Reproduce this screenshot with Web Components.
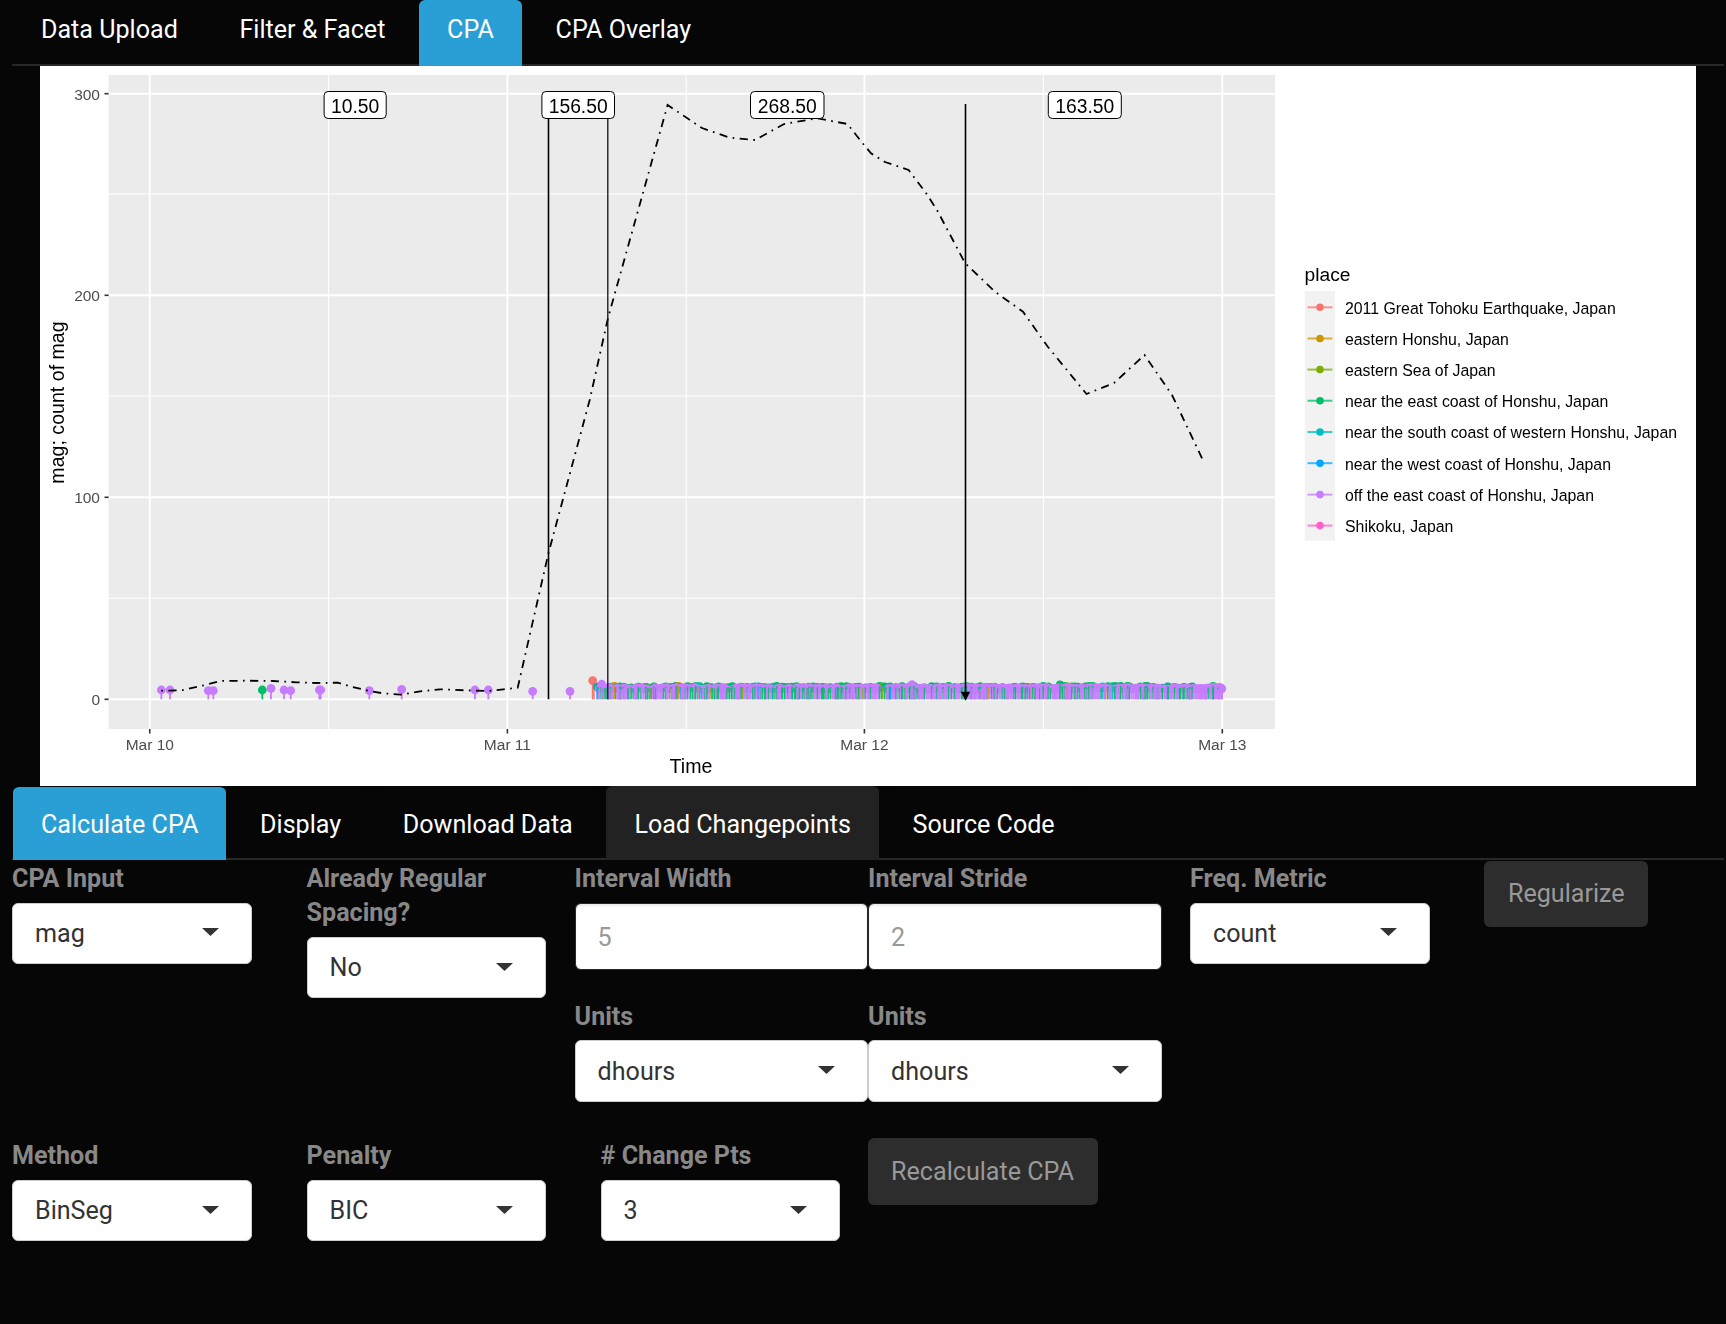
<!DOCTYPE html>
<html lang="en"><head><meta charset="utf-8"><title>CPA</title>
<style>
html,body{margin:0;background:#060606;}
body{font-family:Roboto,"Liberation Sans",sans-serif;font-size:25.1px;color:#fff;height:1324px;overflow:hidden;}
</style></head><body>
<x-tabs first>
  <x-tab>Data Upload</x-tab><x-tab>Filter &amp; Facet</x-tab><x-tab active>CPA</x-tab><x-tab>CPA Overlay</x-tab>
</x-tabs>
<x-plot></x-plot>
<x-tabs>
  <x-tab active>Calculate CPA</x-tab><x-tab>Display</x-tab><x-tab>Download Data</x-tab><x-tab hovered>Load Changepoints</x-tab><x-tab>Source Code</x-tab>
</x-tabs>
<x-row cols="294.6px 268px 293.5px 322px 294.4px auto" gap="35">
  <x-field label="CPA Input"><x-select style="width:239.8px">mag</x-select></x-field>
  <x-field label="Already Regular Spacing?"><x-select style="width:239px">No</x-select></x-field>
  <div>
    <x-field label="Interval Width"><x-input>5</x-input></x-field>
    <x-field label="Units" style="margin-top:27px"><x-select>dhours</x-select></x-field>
  </div>
  <div style="width:293.7px">
    <x-field label="Interval Stride"><x-input>2</x-input></x-field>
    <x-field label="Units" style="margin-top:27px"><x-select>dhours</x-select></x-field>
  </div>
  <x-field label="Freq. Metric"><x-select style="width:239.6px">count</x-select></x-field>
  <x-btn>Regularize</x-btn>
</x-row>
<x-row cols="294.6px 294px 267px 320px" gap="0">
  <x-field label="Method"><x-select style="width:239.8px">BinSeg</x-select></x-field>
  <x-field label="Penalty"><x-select style="width:239px">BIC</x-select></x-field>
  <x-field label="# Change Pts"><x-select style="width:239.2px">3</x-select></x-field>
  <x-btn tall>Recalculate CPA</x-btn>
</x-row>
<script>
const mk=(html)=>{const t=document.createElement('template');t.innerHTML=html;return t;};
class Base extends HTMLElement{
  connectedCallback(){ if(!this.shadowRoot){this.attachShadow({mode:'open'}).appendChild(this.constructor.tpl.content.cloneNode(true));this.init&&this.init();} }
}
class XTabs extends Base{
  static tpl=mk(`<style>
  :host{display:flex;box-sizing:border-box;margin-left:12px;width:1712px;padding-left:1px;border-bottom:2px solid #282828;--pt:20.5px;--pb:17.3px;--bw:1.5px;}
  :host([first]){height:66px;--pt:13.2px;--pb:18.1px;--bw:0px;}
  </style><slot></slot>`);
}
class XTab extends Base{
  static tpl=mk(`<style>
  :host{display:block;box-sizing:border-box;padding:var(--pt) 28px var(--pb);margin:0 5.7px -2px 0;line-height:34.7px;font-size:25.1px;color:#fff;white-space:nowrap;border-top:var(--bw) solid #060606;background-clip:padding-box;border-radius:6px 6px 0 0;}
  :host([active]){background-color:#2A9FD6;}
  :host([hovered]){background-color:#222;border-top-color:#222;}
  </style><slot></slot>`);
}
class XRow extends Base{
  static tpl=mk(`<style>:host{display:grid;margin-left:12px;align-items:start;}</style><slot></slot>`);
  init(){this.style.gridTemplateColumns=this.getAttribute('cols');this.style.marginBottom=this.getAttribute('gap')+'px';}
}
class XField extends Base{
  static tpl=mk(`<style>
  :host{display:block;}
  label{display:block;font-weight:700;color:#888;font-size:25.1px;line-height:34.2px;padding-top:2.4px;margin-bottom:6.6px;max-width:230px;}
  </style><label></label><slot></slot>`);
  init(){this.shadowRoot.querySelector('label').textContent=this.getAttribute('label');}
}
class XSelect extends Base{
  static tpl=mk(`<style>
  :host{display:flex;align-items:center;box-sizing:border-box;height:61.3px;padding:0 32px 0 22px;background:#fff;border:1.5px solid #ccc;border-radius:6px;color:#333;font-size:25.1px;}
  span{flex:1;}
  svg{display:block;margin-top:-2px;}
  </style><span><slot></slot></span><svg width="17" height="8" viewBox="0 0 17 8"><path d="M0 0H17L8.5 8Z" fill="#333"/></svg>`);
}
class XInput extends Base{
  static tpl=mk(`<style>
  :host{display:flex;align-items:center;box-sizing:border-box;height:67.6px;padding:3px 22px 0;background:#fff;border:1.5px solid #282828;border-radius:6px;color:#999;font-size:25.1px;box-shadow:inset 0 2px 2px rgba(0,0,0,.08);}
  </style><slot></slot>`);
}
class XBtn extends Base{
  static tpl=mk(`<style>
  :host{display:inline-flex;justify-content:center;align-items:center;justify-self:start;height:66px;margin-top:1px;padding:0 23.5px;background:#2d2d2d;border-radius:6px;color:#999;font-size:25.1px;white-space:nowrap;}
  :host([tall]){height:67px;}
  </style><slot></slot>`);
}
class XPlot extends Base{
  static tpl=mk(`<style>
  :host{display:block;width:1656px;height:720px;margin-left:40px;background:#fff;}
  svg{display:block;font-family:"Liberation Sans",Arial,sans-serif;filter:blur(.35px);}
  </style><svg id="s" width="1656" height="720" viewBox="40 66 1656 720"></svg>`);
  init(){
    const s=this.shadowRoot.getElementById('s');
    let h='';
    const C={r:'#F8766D',o:'#CD9600',l:'#7CAE00',g:'#00BE67',t:'#00BFC4',b:'#00A9FF',p:'#C77CFF',k:'#FF61CC'};
    const Y0=699.3,L=108.6,R=1275,T=75,B=729;
    h+=`<rect x="${L}" y="${T}" width="${R-L}" height="${B-T}" fill="#EBEBEB"/>`;
    for(const y of [194,396,598.3])h+=`<line x1="${L}" x2="${R}" y1="${y}" y2="${y}" stroke="#fff" stroke-width="1.1"/>`;
    for(const x of [328.6,686.2,1043.4])h+=`<line y1="${T}" y2="${B}" x1="${x}" x2="${x}" stroke="#fff" stroke-width="1.1"/>`;
    for(const y of [93.7,295.3,497.3,699.3])h+=`<line x1="${L}" x2="${R}" y1="${y}" y2="${y}" stroke="#fff" stroke-width="2.1"/>`;
    for(const x of [149.75,507.4,864.4,1222.3])h+=`<line y1="${T}" y2="${B}" x1="${x}" x2="${x}" stroke="#fff" stroke-width="1.9"/>`;
    for(const [y,t] of [[93.7,'300'],[295.3,'200'],[497.3,'100'],[699.3,'0']]){
      h+=`<line x1="104.5" x2="108.6" y1="${y}" y2="${y}" stroke="#333" stroke-width="1.6"/><text x="100" y="${y+6}" text-anchor="end" font-size="15.5" fill="#4D4D4D">${t}</text>`;
    }
    for(const [x,t] of [[149.75,'Mar 10'],[507.4,'Mar 11'],[864.4,'Mar 12'],[1222.3,'Mar 13']]){
      h+=`<line y1="729" y2="733.5" x1="${x}" x2="${x}" stroke="#333" stroke-width="1.6"/><text x="${x}" y="750" text-anchor="middle" font-size="15.5" fill="#4D4D4D">${t}</text>`;
    }
    h+=`<text x="691" y="772.5" text-anchor="middle" font-size="19.6" fill="#000">Time</text>`;
    h+=`<text transform="translate(63.5 402.5) rotate(-90)" text-anchor="middle" font-size="19.6" fill="#000">mag; count of mag</text>`;
    const lolly=(x,y,c)=>`<line x1="${x}" x2="${x}" y1="${y}" y2="${Y0}" stroke="${c}" stroke-width="1.8"/><circle cx="${x}" cy="${y}" r="4.4" fill="${c}"/>`;
    const iso=[[94,90],[120,90],[235,92],[250,92],[397,90,'g'],[423,85],[462,90],[482,92],[568,90],[572,90],[718,92],[815,88],[1035,90],[1075,90],[1208,94],[1320,94]];
    for(const [zx,zy,c] of iso)h+=lolly(130+zx/3,660+zy/3,C[c||'p']);
    h+=lolly(592.7,680.7,C.r);
    h+=`<line x1="594" x2="594" y1="681" y2="${Y0}" stroke="${C.r}" stroke-width="2" stroke-opacity=".7"/>`;
    let seed=12345;const rnd=()=>{seed|=0;seed=seed+0x6D2B79F5|0;let t=Math.imul(seed^seed>>>15,1|seed);t=t+Math.imul(t^t>>>7,61|t)^t;return((t^t>>>14)>>>0)/4294967296;};
    const dense=[];let x=597;
    while(x<1222){
      const r=rnd();
      const c=r<.6?'p':r<.93?'g':r<.95?'o':r<.97?'t':r<.985?'b':'l';
      const y=c==='p'?687.3+rnd()*2.2:686+rnd()*2.4;
      dense.push([+x.toFixed(1),+y.toFixed(1),c]);
      x+=.3+rnd()*1.7;
    }
    dense.push([601.7,684,'p'],[912,684.5,'p'],[1060,684.5,'g'],[1222,689,'p'],[1218,689,'p'],[1213,686,'g']);
    for(const [a,b,c] of dense)if(c!=='p')h+=`<circle cx="${a}" cy="${b}" r="4" fill="${C[c]}"/>`;
    for(const [a,b,c] of dense)if(c==='p')h+=`<circle cx="${a}" cy="${b}" r="4.2" fill="${C[c]}"/>`;
    for(const [a,b,c] of dense)h+=`<line x1="${a}" x2="${a}" y1="${b}" y2="${Y0}" stroke="${C[c]}" stroke-width="${c==='p'?2.1:1.5}" stroke-opacity=".9"/>`;
    const pts=[[161.3,690.7],[170,690.7],[183,690],[205,685],[220,681],[246.7,680.7],[273,681],[296.7,682.3],[316.7,683],[338,682.7],[351.7,686.7],[369.3,691],[383,693.3],[400.7,694.7],[420,691.3],[440,689.3],[475,690.7],[488.3,691],[503.3,689.3],[517.7,687.7],[548.5,553],[589.7,400],[608,318],[667.6,105],[702,128],[729.6,137.7],[755,140],[784,124],[817,118.3],[847.5,124],[860,140],[871,153.3],[885,162],[908.6,170],[926,193],[937,210],[965,263],[995,291.7],[1023,311.7],[1047.8,346.7],[1086.5,394],[1114,383],[1144.5,355],[1172,395],[1177.6,406.7],[1202.5,459.3]];
    h+=`<polyline points="${pts.map(p=>p.join(',')).join(' ')}" fill="none" stroke="#000" stroke-width="1.8" stroke-dasharray="1.7 5.4 8.2 5.4"/>`;
    h+=`<line x1="548.5" x2="548.5" y1="104" y2="${Y0}" stroke="#000" stroke-width="1.6"/>`;
    h+=`<line x1="607.8" x2="607.8" y1="104" y2="${Y0}" stroke="#111" stroke-width="1.3"/>`;
    h+=`<line x1="965.5" x2="965.5" y1="104" y2="693" stroke="#000" stroke-width="1.6"/><path d="M960.8 691.7H970.2L965.5 700.7Z" fill="#000"/>`;
    for(const [a,b,t] of [[323.6,386.7,'10.50'],[541.4,615,'156.50'],[750,824.5,'268.50'],[1047.8,1121.8,'163.50']]){
      h+=`<rect x="${a+.5}" y="91.5" width="${b-a-1}" height="27" rx="4" fill="#fff" stroke="#000" stroke-width="1"/><text x="${(a+b)/2}" y="113" text-anchor="middle" font-size="19.3" fill="#000">${t}</text>`;
    }
    h+=`<text x="1304.6" y="280.5" font-size="19.2" fill="#000">place</text>`;
    h+=`<rect x="1304.8" y="291" width="30.2" height="249.7" fill="#F2F2F2"/>`;
    const leg=[['2011 Great Tohoku Earthquake, Japan','r',307.3],['eastern Honshu, Japan','o',338.5],['eastern Sea of Japan','l',369.6],['near the east coast of Honshu, Japan','g',400.7],['near the south coast of western Honshu, Japan','t',432],['near the west coast of Honshu, Japan','b',463.2],['off the east coast of Honshu, Japan','p',494.6],['Shikoku, Japan','k',525.6]];
    for(const [t,c,y] of leg){
      h+=`<line x1="1307.5" x2="1332.4" y1="${y}" y2="${y}" stroke="${C[c]}" stroke-width="2" stroke-opacity=".75"/><circle cx="1320" cy="${y}" r="3.8" fill="${C[c]}"/>`;
      h+=`<text x="1345" y="${y+6.4}" font-size="15.85" fill="#000">${t}</text>`;
    }
    s.innerHTML=h;
  }
}
customElements.define('x-tabs',XTabs);customElements.define('x-tab',XTab);customElements.define('x-row',XRow);customElements.define('x-field',XField);customElements.define('x-select',XSelect);customElements.define('x-input',XInput);customElements.define('x-btn',XBtn);customElements.define('x-plot',XPlot);
</script>
</body></html>
